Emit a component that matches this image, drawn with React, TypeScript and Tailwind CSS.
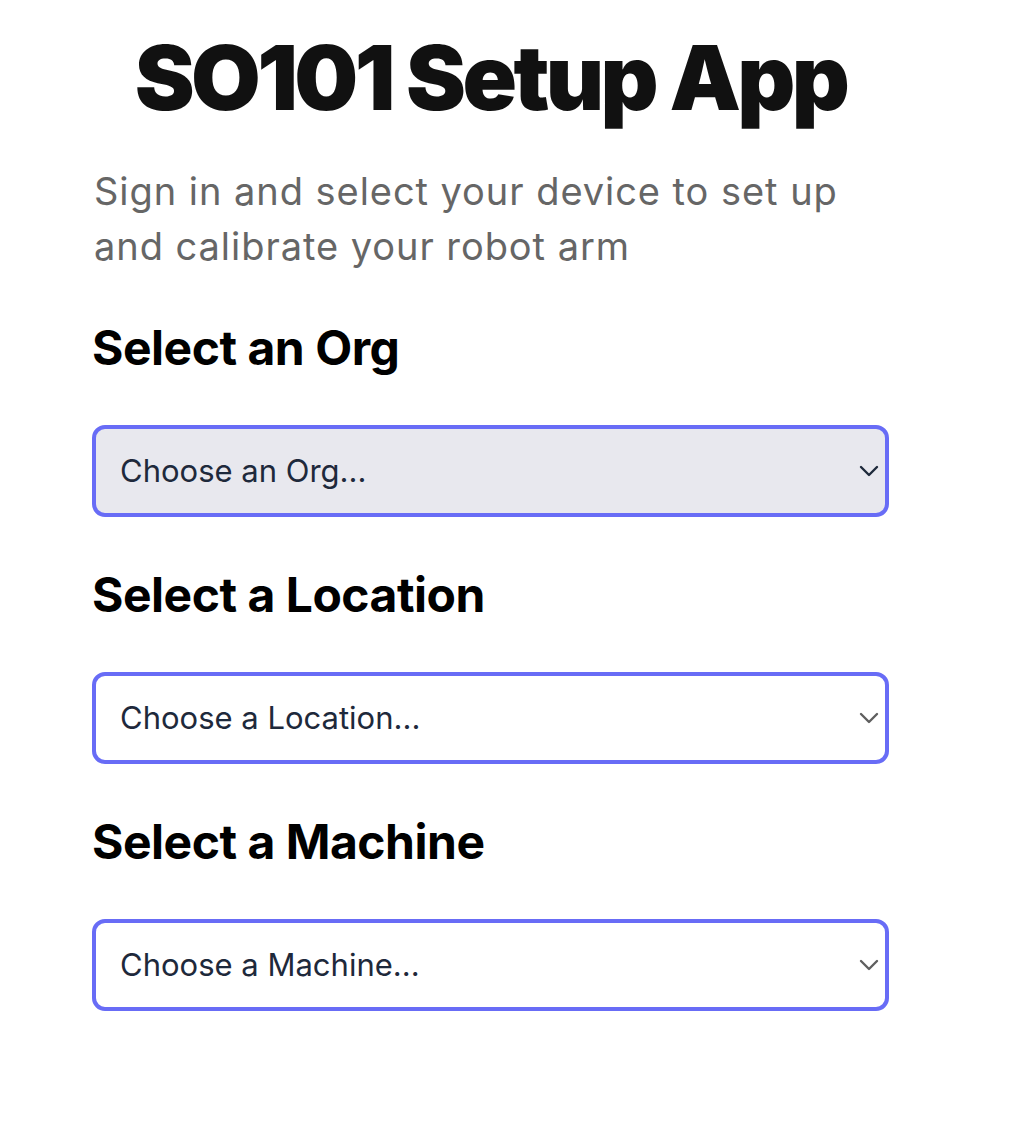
import { ChevronDown } from "lucide-react";

const fields = [
  { label: "Select an Org", placeholder: "Choose an Org...", active: true },
  { label: "Select a Location", placeholder: "Choose a Location...", active: false },
  { label: "Select a Machine", placeholder: "Choose a Machine...", active: false },
];

function Field({ label, placeholder, active }: { label: string; placeholder: string; active: boolean }) {
  return (
    <div className="flex flex-col">
      <h2 className="text-[48px] font-bold leading-[56px] tracking-[-0.01em] text-black">{label}</h2>
      <div className="relative mt-[49px]">
        <div
          className={`flex h-[92px] items-center rounded-[13px] border-[4px] border-[#686cf6] pl-[24px] text-[31px] text-[#1e293b] ${
            active ? "bg-[#e8e8ee]" : "bg-white"
          }`}
        >
          {placeholder}
        </div>
        <ChevronDown
          className={`pointer-events-none absolute right-[4px] top-1/2 h-[32px] w-[32px] -translate-y-1/2 ${
            active ? "text-[#1e293b]" : "text-[#5f5f5f]"
          }`}
          strokeWidth={1.8}
        />
      </div>
    </div>
  );
}

export default function App() {
  return (
    <div className="min-h-screen bg-white font-['Inter',sans-serif]">
      <div className="flex w-[889px] flex-col pl-[92px] pt-[28px]">
        <h1 className="text-center text-[90px] font-black leading-[100px] tracking-[-0.04em] text-[#111111]">
          SO101 Setup App
        </h1>
        <p className="mt-[36px] pl-[2px] text-[38px] leading-[55px] tracking-[0.025em] text-[#666666]">
          Sign in and select your device to set up and calibrate your robot arm
        </p>
        <div className="mt-[46px] flex flex-col gap-[50px]">
          {fields.map((f) => (
            <Field key={f.label} {...f} />
          ))}
        </div>
      </div>
    </div>
  );
}
